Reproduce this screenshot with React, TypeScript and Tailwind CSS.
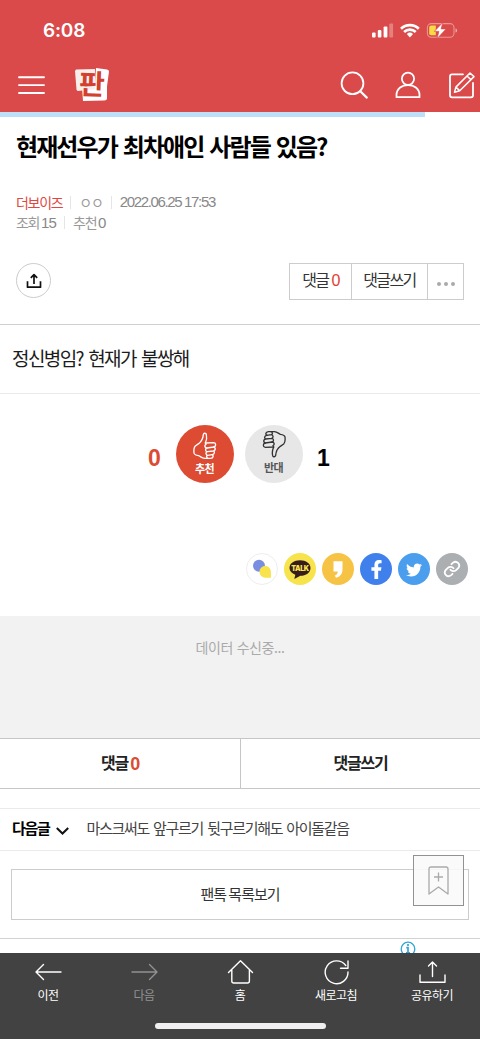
import React from "react";
import { FaFacebookF, FaTwitter } from "react-icons/fa";

const StatusBar = () => (
  <div className="flex h-[58px] items-start justify-between pl-[43px] pr-[22px] pt-[19px]">
    <span className="font-['Inter','Liberation_Sans',sans-serif] text-[19px] font-semibold leading-[23px] tracking-[-0.2px]">
      6:08
    </span>
    <svg className="mt-[3px] h-[17px] w-[86px]" viewBox="372 22 86 17">
      <g fill="#fff">
        <rect x="372" y="32.5" width="3.6" height="5" rx="1" />
        <rect x="377.8" y="30" width="3.6" height="7.5" rx="1" />
        <rect x="383.6" y="26.5" width="3.8" height="11" rx="1" />
        <rect x="389.3" y="23.5" width="3.8" height="14" rx="1" opacity="0.3" />
      </g>
      <g fill="none" stroke="#fff" strokeWidth="2.7">
        <path d="M401 28.7a12.7 12.7 0 0 1 17.8 0" />
        <path d="M404.1 32a8.4 8.4 0 0 1 11.6 0" />
      </g>
      <path d="M406.8 34a4.5 4.5 0 0 1 6.2 0l-3.1 3.5z" fill="#fff" />
      <rect x="427.4" y="23.6" width="26.6" height="13.6" rx="4" fill="none" stroke="#fff" strokeOpacity="0.42" strokeWidth="1.1" />
      <path d="M455.5 28.4c2.2.6 2.2 3.6 0 4.2z" fill="#fff" opacity="0.5" />
      <path d="M431.2 25.5h4.6v9.8h-4.6a2 2 0 0 1-2-2v-5.8a2 2 0 0 1 2-2z" fill="#f8da45" />
      <path d="M442.8 22.5 434.3 31.4h4.6l-1.8 7.2 9-9.7h-5z" fill="#fff" stroke="#da4a4a" strokeWidth="0.7" />
    </svg>
  </div>
);

const Logo = () => (
  <svg className="ml-[29px] h-[46px] w-[36px] overflow-visible" viewBox="74 62 36 46">
    <path d="M82 87 107 85 107 99q-1 1.5-3 1.5L83 101z" fill="#fff" />
    <path d="M76 69.5 95 69 96 89 78 91q-1 0-1.5-1.5L75 71z" fill="#f7eeee" />
    <path d="M96 68 107 69.5q2 .5 2 2L106.5 90 95 89z" fill="#fff" />
    <text
      x="92"
      y="94.5"
      textAnchor="middle"
      fontSize="28"
      fontWeight="700"
      fill="#d3402e"
      fontFamily="Noto Sans CJK KR, sans-serif"
      transform="rotate(2 91 85)"
    >
      판
    </text>
  </svg>
);

const Header = () => (
  <header className="h-[112px] bg-[#da4a4a] text-white">
    <StatusBar />
    <div className="flex h-[54px] items-center pl-[18px]">
      <svg className="h-[20px] w-[27px]" viewBox="0 0 27 20" stroke="#fff" strokeWidth="1.9" strokeLinecap="round">
        <path d="M1 2.2h25M1 10.1h25M1 18h25" />
      </svg>
      <Logo />
      <svg className="ml-auto h-[30px] w-[141px]" viewBox="339 70 141 30" fill="none" stroke="#fff" strokeWidth="1.8" strokeLinecap="round" strokeLinejoin="round">
        <circle cx="352.5" cy="83.3" r="10.9" />
        <path d="M360.3 91.2l6.5 6.4" strokeWidth="2.2" />
        <circle cx="408" cy="78.8" r="6.1" />
        <path d="M396.5 97.2v-2c0-13.6 23-13.6 23 0v2z" />
        <path d="M463 74.3h-11q-2 0-2 2v19q0 2 2 2h19q2 0 2-2V83" />
        <path d="M470 73l4 3.6-14.3 14.2-5.2 1.5 1.4-5.2zM467 76l4 3.7M456 87.1l3.7 3.7" strokeWidth="1.5" />
      </svg>
    </div>
  </header>
);

const Divider = () => <span className="mx-2 h-[13px] w-px bg-[#e5e5e5]" />;

const PostHead = () => (
  <section className="h-[208px] border-b border-[#d0d0d0] px-4 pt-3">
    <h1 className="whitespace-nowrap text-[24px] font-bold leading-[34px] tracking-[-1.9px] text-black [word-spacing:2.3px]">
      현재선우가 최차애인 사람들 있음?
    </h1>
    <div className="mt-[29px] text-[14px] leading-5 tracking-[-1.3px] text-[#999]">
      <div className="flex items-center">
        <span className="text-[#e0483f]">더보이즈</span>
        <Divider />
        <span className="tracking-[-1.2px]">ㅇㅇ</span>
        <Divider />
        <span className="font-['Liberation_Sans',sans-serif] text-[15px] tracking-[-1.35px] text-[#888]">2022.06.25 17:53</span>
      </div>
      <div className="flex items-center">
        <span>조회 <span className="font-['Liberation_Sans',sans-serif] text-[15px] tracking-[-0.8px] text-[#888]">15</span></span>
        <Divider />
        <span>추천 <span className="font-['Liberation_Sans',sans-serif] text-[15px] tracking-[-0.8px] text-[#888]">0</span></span>
      </div>
    </div>
    <div className="mt-[30px] flex items-start justify-between">
      <button className="flex h-[35px] w-[35px] items-center justify-center rounded-full border border-[#ccc]">
        <svg className="h-[16px] w-[16px]" viewBox="0 0 16 16" fill="none" stroke="#111" strokeWidth="1.7" strokeLinejoin="round">
          <path d="M1.5 8.3v5.9h13V8.3M8 11V1.8M4.8 4.8 8 1.6l3.2 3.2" />
        </svg>
      </button>
      <div className="flex h-[37px] w-[175px] border border-[#ccc] text-[16px] leading-[31px] tracking-[-1.6px] text-[#333]">
        <button className="flex w-[62px] justify-center whitespace-pre border-r border-[#ccc]">
          댓글 <span className="ml-px font-['Liberation_Sans',sans-serif] leading-[34px] text-[#e33b32]">0</span>
        </button>
        <button className="flex w-[76px] justify-center border-r border-[#ccc]">댓글쓰기</button>
        <button className="flex flex-1 items-center justify-center gap-[3px] pt-1">
          <i className="h-1 w-1 rounded-full bg-[#aaa]" />
          <i className="h-1 w-1 rounded-full bg-[#aaa]" />
          <i className="h-1 w-1 rounded-full bg-[#aaa]" />
        </button>
      </div>
    </div>
  </section>
);

const Thumb = ({ color }: { color: string }) => (
  <svg className="h-[27px] w-[26px]" viewBox="66 34 78 81" fill="none" stroke={color} strokeWidth="4" strokeLinecap="round" strokeLinejoin="round">
    <path d="M106 67c4-9 5-18 3-26-2-5-8-4-9 1-1 12-6 21-14 27l-10 7c-4 4-5 12-4 21 1 6 8 7 14 8 6 3 10 7 18 8h18c8-1 10-8 4-11" />
    <path d="M106 67l25-1c8 1 8 11 0 13l-20 3c-7 0-9-8-3-11z" />
    <path d="M131 79c7 2 6 11-1 12l-18 2c-7-1-7-9-1-11M130 91c5 2 4 10-3 11l-14 2c-6-1-7-9-1-11M113 104c-5 2-4 8 1 9" />
  </svg>
);

const Votes = () => (
  <section className="flex h-[158px] items-start justify-center pr-[2px] pt-[31px]">
    <span className="mr-[14px] mt-[19px] w-[14px] text-center font-['Liberation_Sans',sans-serif] text-[23px] font-bold leading-[28px] text-[#dc4b32]">0</span>
    <button className="flex h-[58px] w-[58px] flex-col items-center rounded-full bg-[#dc4b32] pt-[7px] text-[11px] font-bold leading-[18px] tracking-[-0.6px] text-white">
      <Thumb color="#fff" />
      추천
    </button>
    <button className="ml-[11px] flex h-[58px] w-[58px] flex-col items-center rounded-full bg-[#e7e7e7] pt-[6px] text-[11px] font-bold leading-[18px] tracking-[-0.6px] text-[#555]">
      <span className="rotate-180"><Thumb color="#333" /></span>
      반대
    </button>
    <span className="ml-[14px] mt-[19px] w-[14px] text-center font-['Liberation_Sans',sans-serif] text-[23px] font-bold leading-[28px] text-black">1</span>
  </section>
);

const shareItem = "flex h-8 w-8 items-center justify-center rounded-full";

const ShareLinks = () => (
  <section className="flex h-[64px] justify-end gap-[6px] pr-[12px] pt-px">
    <a className={`${shareItem} border border-[#eee]`}>
      <svg className="h-5 w-5" viewBox="0 0 20 20">
        <circle cx="7" cy="6.8" r="6" fill="#798ee0" />
        <path d="M12.8 6.7a6.1 6.1 0 0 1 6.1 6.1v6h-6.1a6.1 6.1 0 0 1 0-12.1z" fill="#f8e34c" />
      </svg>
    </a>
    <a className={`${shareItem} bg-[#f7e34b]`}>
      <svg className="h-6 w-6" viewBox="0 0 24 24">
        <path d="M12 3.2c6 0 10.5 3.1 10.5 7.8S18 18.8 12.4 18.8L6.3 22l1-4.3C3.8 16.5 1.5 14 1.5 11 1.5 6.3 6 3.2 12 3.2z" fill="#371d1e" />
        <text x="12" y="13.5" textAnchor="middle" fontSize="7" fontWeight="900" fill="#f7e34b" fontFamily="Inter, sans-serif" letterSpacing="-0.4">TALK</text>
      </svg>
    </a>
    <a className={`${shareItem} bg-[#f6c344]`}>
      <svg className="h-[19px] w-[12px]" viewBox="0 0 12 19">
        <path d="M1.5 1.2h9v7.5c0 5-2.2 8-6.5 9l-1.3-2.2c2.1-.8 3-2.2 3.1-4.1H1.5z" fill="#fff" />
      </svg>
    </a>
    <a className={`${shareItem} bg-[#4080ed]`}><FaFacebookF className="text-[19px] text-white" /></a>
    <a className={`${shareItem} bg-[#4b9eed]`}><FaTwitter className="mt-0.5 text-[16px] text-white" /></a>
    <a className={`${shareItem} bg-[#abafb2]`}>
      <svg className="h-[18px] w-[18px]" viewBox="0 0 24 24" fill="none" stroke="#fff" strokeWidth="2.4" strokeLinecap="round">
        <path d="M10 13a5 5 0 0 0 7.5.5l3-3a5 5 0 0 0-7-7l-2.2 2.1" />
        <path d="M14 11a5 5 0 0 0-7.5-.5l-3 3a5 5 0 0 0 7 7l2.2-2.1" />
      </svg>
    </a>
  </section>
);

const navItems = [
  { label: "이전", d: "M1 13h25M8.5 5.5 1 13l7.5 7.5", off: false },
  { label: "다음", d: "M1 13h25M18.5 5.5 26 13l-7.5 7.5", off: true },
  { label: "홈", d: "M1.5 13.5 13.5 1.8l12 11.7M4.8 11v11q0 2 2 2h13.6q2 0 2-2V11", off: false },
  { label: "새로고침", d: "M25 13A11.4 11.4 0 1 1 22.8 6.5M25 2v7.2h-7.5", off: false },
  { label: "공유하기", d: "M1 16v7.2h25V16M13.5 17.5V3M9.5 7l4-4 4 4", off: false },
];

const BottomNav = () => (
  <nav className="h-[86px] bg-[#424242]">
    <div className="grid h-[70px] grid-cols-5 pt-[6px]">
      {navItems.map((item) => (
        <button
          key={item.label}
          className={`flex flex-col items-center text-[12px] leading-[18px] tracking-[-0.5px] ${item.off ? "text-[#919191]" : "text-white"}`}
        >
          <svg className="h-[26px] w-[27px]" viewBox="0 0 27 26" fill="none" stroke="currentColor" strokeWidth="1.4" strokeLinecap="round" strokeLinejoin="round">
            <path d={item.d} />
          </svg>
          <span className="mt-px">{item.label}</span>
        </button>
      ))}
    </div>
    <div className="mx-auto h-[6px] w-[171px] rounded-full bg-[#f1eff1]" />
  </nav>
);

export default function App() {
  return (
    <div className="relative h-[1039px] w-[480px] overflow-hidden bg-white font-['Noto_Sans_CJK_KR',sans-serif]">
      <div className="h-[953px] overflow-hidden">
        <Header />
        <div className="h-[5px]">
          <div className="h-full w-[425px] bg-[#bddff8]" />
        </div>
        <PostHead />
        <p className="h-[69px] border-b border-[#eaeaea] pl-3 text-[19px] leading-[65px] tracking-[-1.6px] text-[#1c1c1c] [word-spacing:2.6px]">
          정신병임? 현재가 불쌍해
        </p>
        <Votes />
        <ShareLinks />
        <div className="h-[122px] bg-[#f2f2f2] pt-[20px] text-center text-[14px] leading-[22px] tracking-[-0.4px] text-[#aaa] [word-spacing:1px]">
          데이터 수신중...
        </div>
        <div className="flex h-[51px] border-y border-[#c6c6c6] text-[16px] font-bold leading-[47px] tracking-[-1.25px] text-[#222]">
          <button className="flex w-[241px] justify-center whitespace-pre border-r border-[#c6c6c6]">
            댓글 <span className="font-['Liberation_Sans',sans-serif] text-[18px] leading-[50px] text-[#dc4b32]">0</span>
          </button>
          <button className="flex flex-1 justify-center">댓글쓰기</button>
        </div>
        <div className="mt-[19px] flex h-[43px] items-center border-y border-[#eaeaea] pb-[2px] pl-3 text-[15px] tracking-[-1.3px]">
          <strong className="font-bold text-black">다음글</strong>
          <svg className="ml-[6px] mt-1 h-[8px] w-[13px]" viewBox="0 0 13 8" fill="none" stroke="#111" strokeWidth="2">
            <path d="M.8 1l5.7 5.5L12.2 1" />
          </svg>
          <span className="ml-[18px] whitespace-nowrap text-[#444] [word-spacing:2px]">마스크써도 앞구르기 뒷구르기해도 아이돌같음</span>
        </div>
        <div className="h-[88px] border-b border-[#d2d2d2] px-[11px] pt-[18px]">
          <button className="h-[51px] w-full border border-[#ccc] text-[15px] tracking-[-1px] text-[#333]">팬톡 목록보기</button>
        </div>
        <svg className="ml-[400px] mt-[2px] h-[16px] w-[16px]" viewBox="0 0 16 16" fill="none" stroke="#32a5d6" strokeWidth="1.3">
          <circle cx="8" cy="8" r="6.8" />
          <path d="M8 3v2M6.3 6.7H8v5M6 11.8h4" strokeWidth="1.7" />
        </svg>
      </div>
      <BottomNav />
      {/* floating bookmark button */}
      <button className="absolute left-[413px] top-[855px] flex h-[51px] w-[51px] items-center justify-center border border-[#929292] bg-[#fafafa]/90">
        <svg className="h-[29px] w-[21px]" viewBox="0 0 21 29" fill="none" stroke="#aaa" strokeWidth="1.3" strokeLinejoin="round">
          <path d="M1 28V3q0-2 2-2h15q2 0 2 2v25l-9.5-7zM10.5 6.5v9M6 11h9" />
        </svg>
      </button>
    </div>
  );
}
